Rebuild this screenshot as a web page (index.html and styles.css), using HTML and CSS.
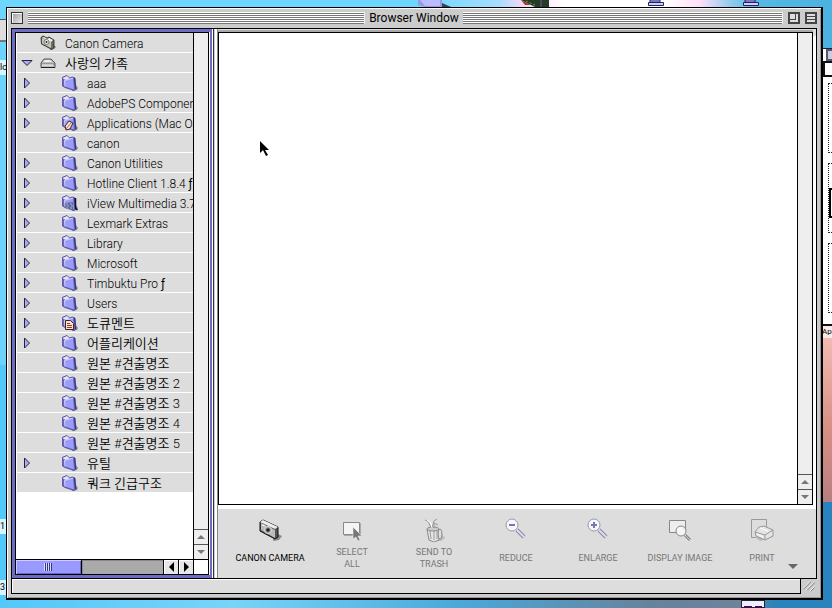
FILE: index.html
```html
<!DOCTYPE html>
<html lang="ko">
<head>
<meta charset="utf-8">
<title>Browser Window</title>
<link rel="stylesheet" href="styles.css">
</head>
<body>
<svg class="defs" aria-hidden="true">
  <defs>
    <symbol id="folder" viewBox="0 0 16 16">
      <path d="M13 9l3 4-1 2-5 1z" fill="#8a8a9a"/>
      <path d="M0 2.500L5 .5 7.500 3l3-1 2.500 1 1 11-2 1.500-9-3L.5 11z" fill="#6868c0" stroke="#44448c" stroke-width=".8"/>
      <path d="M.5 3L5 1l2.500 2.500 3-1L3.500 5z" fill="#e4e4ff"/>
      <path d="M2.500 5.500L11 3l1 11.500-9-3z" fill="#9c9cfc"/>
      <path d="M2.500 5.500L11 3M2.500 5.500l.5 6" stroke="#d4d4ff" fill="none"/>
      <path d="M12.500 3l1 11" stroke="#34347c" fill="none"/>
    </symbol>
    <symbol id="camera" viewBox="0 0 24 24">
      <path d="M16 14l8 4-3 4-6 1z" fill="#888"/>
      <path d="M2 4l3-2 15 7v10l-3 2L2 13z" fill="#555" stroke="#111"/>
      <path d="M2 4l3-2 15 7-3 2z" fill="#eee"/>
      <path d="M3 5l14 7v8L3 12z" fill="#bbb"/>
      <circle cx="10" cy="12" r="3.500" fill="#999" stroke="#ddd"/>
      <circle cx="10" cy="12" r="1.800" fill="#222"/>
      <path d="M4 7l3 1" stroke="#fff"/>
    </symbol>
    <symbol id="small-camera" viewBox="0 0 16 16">
      <path d="M11 8l5 4-2 2-4 1z" fill="#777"/>
      <path d="M1 2.500L3 1l4 2 2-1 5 3v7l-2 2.500L1.500 9z" fill="#6c6c60" stroke="#222" stroke-width=".8"/>
      <path d="M2 3l9 4v6L2 8.500z" fill="#c4c4b8"/>
      <path d="M2 2.500L4 2l3 2 2-1 4 2-2 2z" fill="#f2f2ea"/>
      <circle cx="6.500" cy="7" r="2.500" fill="#eee" stroke="#555" stroke-width=".7"/>
      <circle cx="6.500" cy="7" r="1" fill="#222"/>
    </symbol>
    <symbol id="disk" viewBox="0 0 16 16">
      <path d="M1 8l3-4h7l4 4v4.500H1z" fill="#bbb" stroke="#555"/>
      <path d="M3 7l2-2h5l2 2z" fill="#eee"/>
      <path d="M1 9h14" stroke="#777"/>
      <path d="M2 10h11" stroke="#fff"/>
      <path d="M1 12.500h14" stroke="#222"/>
    </symbol>
    <symbol id="right" viewBox="0 0 8 12"><path d="M1.500 1v10l5-5z" fill="#aaf" stroke="#223"/></symbol>
    <symbol id="down" viewBox="0 0 12 8"><path d="M1 1.500h10l-5 5z" fill="#aaf" stroke="#223"/></symbol>
    <symbol id="up-arrow" viewBox="0 0 8 4"><path d="M0 4h8L4 0z"/></symbol>
    <symbol id="down-arrow" viewBox="0 0 8 4"><path d="M0 0h8L4 4z"/></symbol>
  </defs>
</svg>

<div class="backdrop" aria-hidden="true">
  <svg class="top-scraps" width="360" height="7" viewBox="0 0 360 7">
    <path d="M0 0h24v7H7L0 5z" fill="#99d"/><path d="M2 0h20v6H7z" fill="#bbf"/><path d="M24 3l9 4h-9z" fill="#345"/>
    <path d="M103 0h28v7h-14z" fill="#253c28"/><path d="M108 1l9 4" stroke="#5a4" stroke-dasharray="2 2"/><path d="M103 0l10 5h-6z" fill="#a33"/><path d="M123 0v7" stroke="#759"/>
    <path d="M232 0h10v2h-10zM230.500 2.500h15v3h-15z" fill="#ccf" stroke="#226"/>
    <path d="M327 0h10v2h-10zM325.500 2.500h15v3h-15z" fill="#ccf" stroke="#226"/>
  </svg>
  <div class="left-window"></div>
  <span class="left-label first">lc</span>
  <span class="left-label second">1</span>
  <span class="left-label third">3</span>
  <div class="right-window">
    <div class="right-title"></div>
    <div class="right-tab"></div>
    <div class="right-cell"></div>
    <div class="right-cell selected"></div>
    <div class="right-cell"></div>
    <span class="right-label">Ap</span>
  </div>
  <div class="pink-photo"></div>
  <div class="bottom-scrap"></div>
</div>

<main class="window">
  <header class="titlebar">
    <div class="side">
      <button class="close" aria-label="Close"></button>
      <div class="stripes"></div>
    </div>
    <h1>Browser Window</h1>
    <div class="side">
      <div class="stripes"></div>
      <button class="box zoom" aria-label="Zoom"></button>
      <button class="box collapse" aria-label="Collapse"></button>
    </div>
  </header>

  <div class="content">
    <nav class="sidebar" aria-label="Folders">
      <div class="tree-area">
        <ul class="tree">
          <li class="root"><span></span><svg class="icon"><use href="#small-camera"/></svg><span class="name">Canon Camera</span></li>
          <li class="root"><button class="open" aria-label="Collapse"><svg><use href="#down"/></svg></button><svg class="icon"><use href="#disk"/></svg><span class="name ko">사랑의 가족</span></li>
          <li><button aria-label="Expand"><svg><use href="#right"/></svg></button><svg class="icon"><use href="#folder"/></svg><span class="name">aaa</span></li>
          <li><button aria-label="Expand"><svg><use href="#right"/></svg></button><svg class="icon"><use href="#folder"/></svg><span class="name">AdobePS Component</span></li>
          <li><button aria-label="Expand"><svg><use href="#right"/></svg></button><svg class="icon" viewBox="0 0 16 16"><use href="#folder"/><path d="M3 11l4-5 4 2-3 6-4 1z" fill="#f2e4d8" stroke="#422"/><path d="M4 14l5-6" stroke="#c63"/></svg><span class="name">Applications (Mac OS</span></li>
          <li><span></span><svg class="icon"><use href="#folder"/></svg><span class="name">canon</span></li>
          <li><button aria-label="Expand"><svg><use href="#right"/></svg></button><svg class="icon"><use href="#folder"/></svg><span class="name">Canon Utilities</span></li>
          <li><button aria-label="Expand"><svg><use href="#right"/></svg></button><svg class="icon"><use href="#folder"/></svg><span class="name">Hotline Client 1.8.4 <b>ƒ</b></span></li>
          <li><button aria-label="Expand"><svg><use href="#right"/></svg></button><svg class="icon" viewBox="0 0 16 16"><use href="#folder"/><path d="M13.500 3v10l2 2" stroke="#112" stroke-width="1.500" fill="none"/><path d="M3 8l8-1v7H4z" fill="#669"/><path d="M4 9h2m2 0h2M5 11h2m2 0h2M4 13h2m2 0h2" stroke="#9bd"/></svg><span class="name">iView Multimedia 3.7</span></li>
          <li><button aria-label="Expand"><svg><use href="#right"/></svg></button><svg class="icon"><use href="#folder"/></svg><span class="name">Lexmark Extras</span></li>
          <li><button aria-label="Expand"><svg><use href="#right"/></svg></button><svg class="icon"><use href="#folder"/></svg><span class="name">Library</span></li>
          <li><button aria-label="Expand"><svg><use href="#right"/></svg></button><svg class="icon"><use href="#folder"/></svg><span class="name">Microsoft</span></li>
          <li><button aria-label="Expand"><svg><use href="#right"/></svg></button><svg class="icon"><use href="#folder"/></svg><span class="name">Timbuktu Pro <b>ƒ</b></span></li>
          <li><button aria-label="Expand"><svg><use href="#right"/></svg></button><svg class="icon"><use href="#folder"/></svg><span class="name">Users</span></li>
          <li><button aria-label="Expand"><svg><use href="#right"/></svg></button><svg class="icon" viewBox="0 0 16 16"><use href="#folder"/><path d="M3.500 5.500h5l3 3v6h-8z" fill="#fdc" stroke="#422"/><path d="M5 8.500h3M5 10.500h5M5 12.500h5" stroke="#743"/></svg><span class="name ko">도큐멘트</span></li>
          <li><button aria-label="Expand"><svg><use href="#right"/></svg></button><svg class="icon"><use href="#folder"/></svg><span class="name ko">어플리케이션</span></li>
          <li><span></span><svg class="icon"><use href="#folder"/></svg><span class="name ko">원본 #견출명조</span></li>
          <li><span></span><svg class="icon"><use href="#folder"/></svg><span class="name ko">원본 #견출명조 2</span></li>
          <li><span></span><svg class="icon"><use href="#folder"/></svg><span class="name ko">원본 #견출명조 3</span></li>
          <li><span></span><svg class="icon"><use href="#folder"/></svg><span class="name ko">원본 #견출명조 4</span></li>
          <li><span></span><svg class="icon"><use href="#folder"/></svg><span class="name ko">원본 #견출명조 5</span></li>
          <li><button aria-label="Expand"><svg><use href="#right"/></svg></button><svg class="icon"><use href="#folder"/></svg><span class="name ko">유틸</span></li>
          <li><span></span><svg class="icon"><use href="#folder"/></svg><span class="name ko">쿼크 긴급구조</span></li>
        </ul>
        <div class="vscroll">
          <button aria-label="Scroll up"><svg><use href="#up-arrow"/></svg></button>
          <button aria-label="Scroll down"><svg><use href="#down-arrow"/></svg></button>
        </div>
      </div>
      <div class="hscroll">
        <div class="thumb"><i></i></div>
        <div class="track"></div>
        <button aria-label="Scroll left"><svg viewBox="0 0 5 10"><path d="M5 0v10L0 5z"/></svg></button>
        <button aria-label="Scroll right"><svg viewBox="0 0 5 10"><path d="M0 0v10l5-5z"/></svg></button>
        <div class="corner"></div>
      </div>
    </nav>
    <div class="divider"></div>
    <section class="main">
      <div class="viewer">
        <div class="canvas">
          <svg class="pointer" viewBox="0 0 10 16"><path d="M1 0v12l3-3 3 6 2-1-3-5h4z"/></svg>
        </div>
        <div class="vscroll">
          <button aria-label="Scroll up"><svg><use href="#up-arrow"/></svg></button>
          <button aria-label="Scroll down"><svg><use href="#down-arrow"/></svg></button>
        </div>
      </div>
      <div class="toolbar">
        <button class="tool active"><svg viewBox="0 0 24 24"><use href="#camera"/></svg><span>CANON CAMERA</span></button>
        <button class="tool"><svg viewBox="0 0 24 24"><path d="M3.500 4.500h16v12h-16z" fill="#f4f4f4" stroke="#888"/><path d="M4 17.500h16.500V5" stroke="#aaa" fill="none"/><path d="M13 9v12l3-2 2 4 2-1-2-4h4z" fill="#777" stroke="#eee" stroke-width=".6"/></svg><span>SELECT<br>ALL</span></button>
        <button class="tool"><svg viewBox="0 0 24 24"><path d="M16 12l7 8-4 3h-7z" fill="#bbb"/><path d="M5 11l2 11 5 2 5-2V11z" fill="#e6e6e6" stroke="#888"/><path d="M8 13l1 8m3-8v9m3-9v8" stroke="#999"/><ellipse cx="11" cy="11" rx="6" ry="2" fill="#ccc" stroke="#888"/><path d="M9 10L6 3 3 2m7 8l2-7 3-2m-3 9V5l4 2" stroke="#999" fill="none"/><path d="M5 2l4 3 1 5" stroke="#fff" fill="none"/><ellipse cx="18" cy="16" rx="2" ry="5" fill="#ddd" stroke="#888"/></svg><span>SEND TO<br>TRASH</span></button>
        <button class="tool"><svg viewBox="0 0 24 24"><path d="M13 12l7 7" stroke="#88a" stroke-width="4"/><path d="M13 12l7 7" stroke="#dde" stroke-width="2"/><circle cx="8" cy="7" r="6" fill="#f6f6ff" stroke="#99a"/><path d="M5 7h6" stroke="#77a" stroke-width="2"/></svg><span>REDUCE</span></button>
        <button class="tool"><svg viewBox="0 0 24 24"><path d="M13 12l7 7" stroke="#88a" stroke-width="4"/><path d="M13 12l7 7" stroke="#dde" stroke-width="2"/><circle cx="8" cy="7" r="6" fill="#f6f6ff" stroke="#99a"/><path d="M5 7h6M8 4v6" stroke="#77a" stroke-width="2"/></svg><span>ENLARGE</span></button>
        <button class="tool"><svg viewBox="0 0 24 24"><path d="M1.500 2.500h16v12h-16z" fill="#eee" stroke="#888"/><path d="M17 17l5 5" stroke="#888" stroke-width="3"/><path d="M17 17l5 5" stroke="#ccc"/><circle cx="13" cy="13" r="5" fill="#f4f4f4" stroke="#888"/><path d="M10 12l3-2" stroke="#fff"/></svg><span>DISPLAY IMAGE</span></button>
        <button class="tool"><svg viewBox="0 0 24 24"><path d="M1.500 1.500h15v18h-15z" fill="#ddd" stroke="#999"/><path d="M5 19l5 4 12-4v-4z" fill="#bbb"/><path d="M5 14l4-5 5-1 9 4v6l-8 4-9-4z" fill="#e4e4e4" stroke="#999"/><path d="M5 14l10 3 8-5M15 17v5" stroke="#999" fill="none"/><path d="M7 16l6 3M10 10l8 3" stroke="#fff"/></svg><span>PRINT</span></button>
        <button class="more" aria-label="More tools"><svg viewBox="0 0 10 5"><path d="M0 0h10L5 5z"/></svg></button>
      </div>
    </section>
  </div>
  <footer class="statusbar">
    <div class="status"></div>
    <svg class="grip" viewBox="0 0 16 16"><path d="M2 10l7-7M5 12l8-8M9 13l5-5" stroke="#fff"/><path d="M2 11l8-8M6 12l8-8M10 13l4-4" stroke="#777"/></svg>
  </footer>
</main>
</body>
</html>
```

FILE: styles.css
```css
* { box-sizing: border-box; }

body {
  margin: 0;
  min-height: 100vh;
  display: flex;
  padding: 7px 9px 8px 6px;
  position: relative;
  overflow: hidden;
  font: 12px/20px Roboto, "Liberation Sans", "Noto Sans CJK KR", sans-serif;
  color: #000;
  background:
    linear-gradient(90deg, #6cd4fc 0 44%, transparent 60%) top / 100% 60% no-repeat,
    linear-gradient(90deg, #52c8fb, #78d4f8 28%, #4aa9da 55%, #66839d 78%, #70829c 90%, #2984bd 93%);
}

button {
  margin: 0;
  padding: 0;
  border: 0;
  background: none;
  font: inherit;
  color: inherit;
  display: flex;
  align-items: center;
  justify-content: center;
}

svg { display: block; }
.defs { position: absolute; width: 0; height: 0; }

/* Desktop behind the window */
.backdrop { position: absolute; inset: 0; overflow: hidden; }
.backdrop::before {
  content: "";
  position: absolute;
  inset: 0 0 auto;
  height: 48px;
  background: linear-gradient(90deg, #6cd6ff 0 50%, #a6dcff 60%, #fbd8f4 63%, #fff 68% 80%, #ffe0f8 84%, #8ccbee 88%, #55b9e5 91%, #4bb1df);
}
.top-scraps { position: absolute; left: 418px; top: 0; }
.left-window { position: absolute; left: 0; top: 19px; width: 6px; height: 23px; background: #ddd; border-bottom: 2px solid #777; border-top: 1px solid #555; }
.left-label { position: absolute; left: 0; width: 6px; height: 15px; background: #d9f3ff; font-size: 9px; line-height: 15px; }
.first { top: 60px; }
.second { top: 519px; }
.third { top: 580px; }
.right-window { position: absolute; right: 0; top: 48px; width: 10px; height: 290px; background: #fff; border-top: 1px solid #223; overflow: hidden; }
.right-title { height: 12px; margin-left: 4px; border: 2px solid #557; border-right: 0; background: #ccd; }
.right-tab { height: 16px; margin-left: 1px; border: 2px solid #111; border-right: 0; }
.right-cell { height: 70px; margin: 6px 0 10px 6px; border: 1px dotted #222; border-right: 0; }
.selected { padding-top: 24px; }
.selected::before { content: ""; display: block; height: 26px; border: 2px solid #000; border-right: 0; }
.right-label { position: absolute; left: 0; right: 0; bottom: 0; height: 14px; border-top: 2px solid #111; background: #fbe9e6; font-size: 8px; line-height: 12px; }
.pink-photo { position: absolute; right: 0; top: 338px; width: 10px; height: 164px; background: linear-gradient(#f3bbb3, #d88f84 55%, #b77f82); }
.bottom-scrap { position: absolute; left: 741px; bottom: 0; width: 24px; height: 8px; border: 1px solid #223; background: repeating-linear-gradient(90deg, #407 0 8px, transparent 8px 11px) 2px 5px / 18px 1px no-repeat #eef; }

/* Window frame */
.window {
  position: relative;
  flex: 1;
  min-width: 0;
  display: flex;
  flex-direction: column;
  background: #ccc;
  border: 1px solid #000;
  border-width: 1px 2px 2px 1px;
  box-shadow: inset 1px 1px #fff, inset -1px -1px #999;
  padding: 0 4px 4px;
}

.titlebar { display: grid; grid-template-columns: 1fr auto 1fr; align-items: center; gap: 4px; height: 20px; }
.titlebar h1 { margin: 0; font-size: 12px; font-weight: 400; line-height: 16px; }
.side { display: flex; align-items: center; gap: 5px; }
.stripes { flex: 1; height: 12px; border-right: 1px solid #eee; background: repeating-linear-gradient(#fff 0 1px, #777 1px 2px); }
.close { width: 12px; height: 12px; border: 1px solid #333; background: linear-gradient(135deg, #999, #eee); box-shadow: inset 1px 1px #fff; }
.box { width: 12px; height: 12px; border: 2px solid #444; }
.zoom { background: linear-gradient(#444, #444) 0 5px / 6px 1px no-repeat, linear-gradient(#444, #444) 5px 0 / 1px 6px no-repeat, #ddd; }
.collapse { background: linear-gradient(#444, #444) 0 2px / 100% 1px no-repeat, linear-gradient(#444, #444) 0 5px / 100% 1px no-repeat, #ddd; }

.content { flex: 1; display: flex; border: 1px solid #000; border-bottom: 0; background: #ddd; min-height: 0; }

/* Folder tree */
.sidebar { width: 200px; display: flex; flex-direction: column; border: 3px solid #6c6cc4; border-right-width: 2px; box-shadow: inset -1px 0 #fff; padding-right: 1px; }
.tree-area { flex: 1; display: flex; border: 1px solid #000; border-width: 1px 1px 0; background: #fff; }
.tree { flex: 1; min-width: 0; margin: 0; padding: 0; list-style: none; overflow: hidden; }
.tree li { display: grid; grid-template-columns: 45px 25px 1fr; align-items: center; height: 20px; padding-top: 1px; background: #ddd; border-bottom: 1px solid #fff; border-left: 1px solid #fff; }
.tree li.root { grid-template-columns: 23px 25px 1fr; }
.tree li button { width: 20px; height: 18px; }
.tree li button svg { width: 8px; height: 12px; }
.tree li .open svg { width: 12px; height: 8px; }
.icon { width: 16px; height: 16px; }
.name { white-space: nowrap; line-height: 16px; padding-top: 2px; font-weight: 300; }
.ko { font-size: 13px; font-weight: 350; }

.vscroll { width: 15px; display: flex; flex-direction: column; justify-content: flex-end; border-left: 1px solid #000; background: #eee; }
.vscroll button { height: 15px; border-top: 1px solid #555; }
.vscroll svg { width: 8px; height: 4px; fill: #777; }
.hscroll { display: flex; height: 16px; border: 1px solid #000; }
.hscroll button { width: 15px; border-right: 1px solid #000; background: #e6e6e6; box-shadow: inset 1px 1px #fff; }
.hscroll button svg { width: 5px; height: 10px; }
.thumb { flex: 4; display: flex; align-items: center; justify-content: center; background: #99f; border-right: 1px solid #000; box-shadow: inset 1px 1px #ccf, inset -1px -1px #66c; }
.thumb i { width: 8px; height: 8px; background: repeating-linear-gradient(90deg, #dde 0 1px, #339 1px 2px); }
.track { flex: 5; background: #aaa; border-right: 1px solid #000; box-shadow: inset 1px 1px #888; }
.corner { width: 14px; background: #fff; }
.divider { width: 6px; border-left: 1px solid #fff; background: linear-gradient(90deg, #333 0 1px, #ccc 1px 2px, #fff 2px 4px, #888 4px); }

/* Viewer and tools */
.main { flex: 1; min-width: 0; display: flex; flex-direction: column; }
.viewer { flex: 1; display: flex; margin: 3px 3px 0 0; border: 1px solid #000; background: #fff; box-shadow: 3px 4px #fff, 0 4px #fff, 0 -2px #aaa; }
.canvas { flex: 1; padding: 108px 40px; }
.pointer { width: 10px; height: 16px; }
.toolbar { display: grid; grid-template-columns: repeat(7, 82px); margin-top: 4px; padding: 9px 0 0 11px; height: 69px; position: relative; }
.tool { flex-direction: column; justify-content: flex-start; font-size: 9px; line-height: 12px; color: #777; }
.tool svg { width: 24px; height: 24px; }
.tool span { min-height: 32px; display: grid; place-items: center; place-content: center; text-align: center; }
.tool.active { color: #000; }
.more { position: absolute; right: 18px; bottom: 9px; }
.more svg { width: 10px; height: 5px; fill: #666; }

.statusbar { display: flex; height: 16px; }
.status { flex: 1; border: 1px solid #000; background: #ddd; box-shadow: inset 1px 1px #fff; }
.grip { width: 16px; height: 16px; border-top: 1px solid #000; }
```
